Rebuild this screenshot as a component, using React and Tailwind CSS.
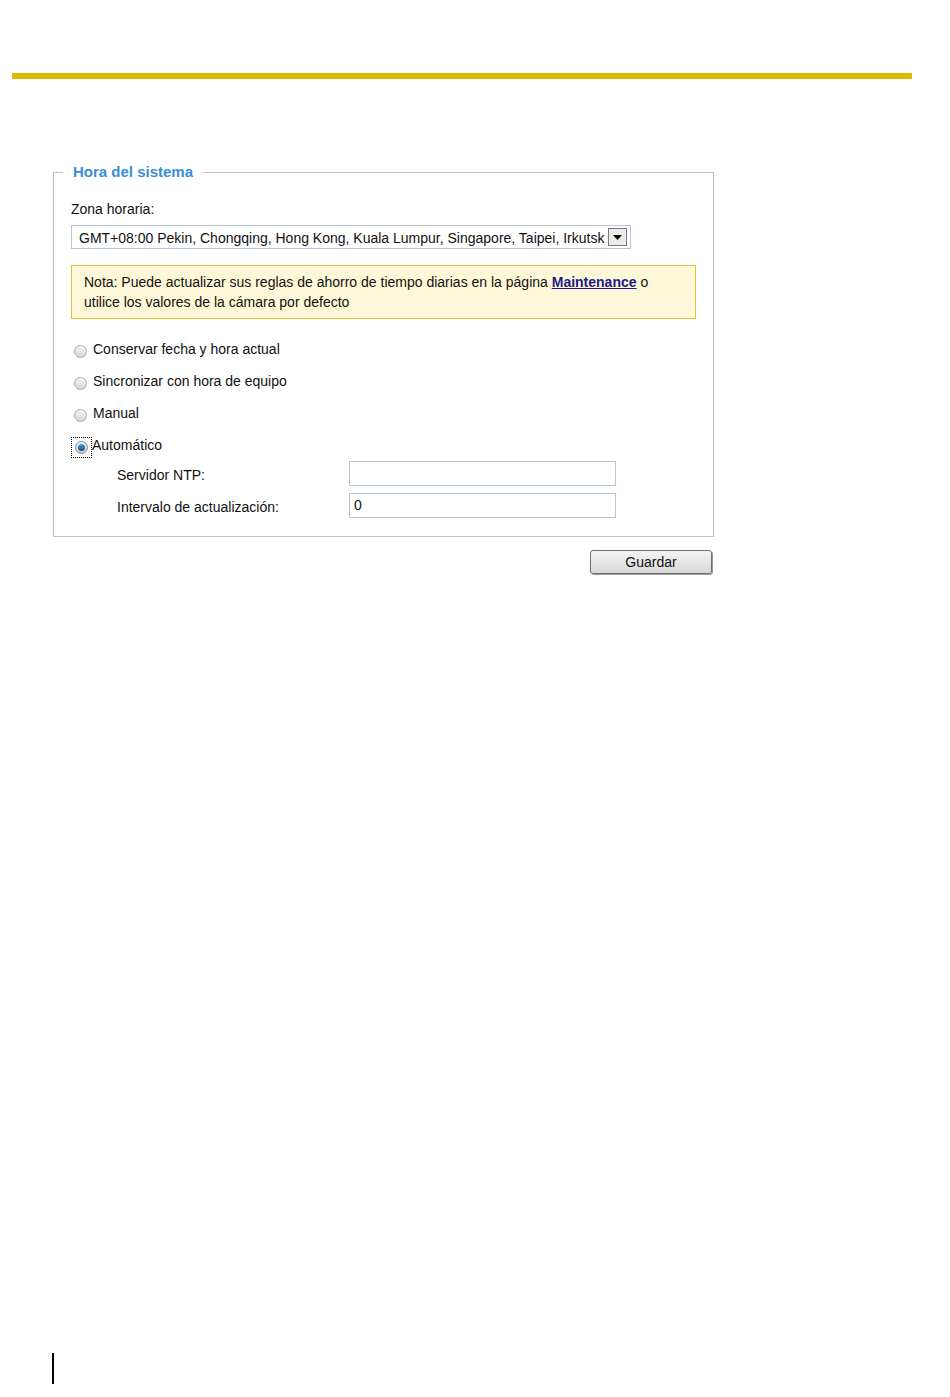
const radios = [
  { label: "Conservar fecha y hora actual", checked: false },
  { label: "Sincronizar con hora de equipo", checked: false },
  { label: "Manual", checked: false },
  { label: "Automático", checked: true },
]

function Radio({ checked }) {
  if (checked) {
    return (
      <span className="mt-[4px] flex h-[21px] w-[21px] items-center justify-center border border-dotted border-black">
        <span className="flex h-[13px] w-[13px] items-center justify-center rounded-full border border-[#8a8a8a] bg-gradient-to-b from-[#f4f4f4] to-[#cfcfcf]">
          <span className="h-[7px] w-[7px] rounded-full bg-gradient-to-b from-[#4aa3e0] to-[#0c4f8a]" />
        </span>
      </span>
    )
  }
  return (
    <span className="ml-[3px] mt-[4px] h-[13px] w-[13px] rounded-full border border-[#a8a8a8] bg-gradient-to-b from-[#f6f6f6] to-[#d6d6d6]" />
  )
}

export default function App() {
  return (
    <div
      className="min-h-[1397px] w-[950px] bg-white text-[14px] text-[#111]"
      style={{ fontFamily: '"Liberation Sans", Arial, sans-serif' }}
    >
      <div className="h-[73px]" />
      <div className="ml-[12px] h-[6px] w-[900px] bg-[#dfb900]" />

      <div className="ml-[53px] mt-[84px] w-[661px]">
        <fieldset className="border border-[#c4c0b8]">
          <legend className="ml-[9px] px-[10px] text-[15px] font-bold leading-[18px] text-[#3b8ed6]">
            Hora del sistema
          </legend>

          <div className="px-[17px] pb-[18px]">
            <div className="pt-[20px] leading-[16px]">Zona horaria:</div>

            {/* Selector de zona */}
            <div className="mt-[8px] flex h-[24px] w-[560px] items-center justify-between border border-[#b7c4d6] pl-[7px] pr-[3px]">
              <span className="pt-[2px] leading-[18px]">
                GMT+08:00 Pekin, Chongqing, Hong Kong, Kuala Lumpur, Singapore, Taipei, Irkutsk
              </span>
              <span className="flex h-[18px] w-[19px] items-center justify-center border border-[#7a7a7a] bg-[#ececec]">
                <svg width="9" height="5" viewBox="0 0 9 5">
                  <path d="M0 0H9L4.5 5Z" fill="#000" />
                </svg>
              </span>
            </div>

            {/* Nota */}
            <div className="mt-[16px] border border-[#dcc43c] bg-[#fff8d8] px-[12px] pb-[6px] pt-[6px] leading-[20px]">
              Nota: Puede actualizar sus reglas de ahorro de tiempo diarias en la página{" "}
              <span className="font-bold text-[#1c1c8a] underline">Maintenance</span> o
              <br />
              utilice los valores de la cámara por defecto
            </div>

            {/* Opciones */}
            <div className="mt-[14px]">
              {radios.map((r) => (
                <div key={r.label} className="flex h-[32px] items-center gap-[5px]">
                  <Radio checked={r.checked} />
                  <span className={r.checked ? "-ml-[5px]" : "ml-[1px]"}>{r.label}</span>
                </div>
              ))}
            </div>

            <div className="flex flex-col gap-[7px]">
              <div className="flex h-[25px] items-center">
                <span className="ml-[46px] w-[232px] pt-[4px]">Servidor NTP:</span>
                <div className="h-[25px] w-[267px] border border-[#b7c4d6]" />
              </div>
              <div className="flex h-[25px] items-center">
                <span className="ml-[46px] w-[232px] pt-[4px]">Intervalo de actualización:</span>
                <div className="flex h-[25px] w-[267px] items-center border border-[#b7c4d6] px-[4px]">
                  0
                </div>
              </div>
            </div>
          </div>
        </fieldset>

        <div className="mt-[13px] flex justify-end pr-[2px]">
          <button className="h-[24px] w-[122px] rounded-[3px] border border-[#707070] bg-gradient-to-b from-[#f4f4f4] to-[#d8d8d8] text-[14px] text-[#111] shadow-[1px_1px_0_#9a9a9a]">
            Guardar
          </button>
        </div>
      </div>

      <div className="ml-[52px] mt-[779px] h-[31px] w-[2px] bg-black" />
    </div>
  )
}
